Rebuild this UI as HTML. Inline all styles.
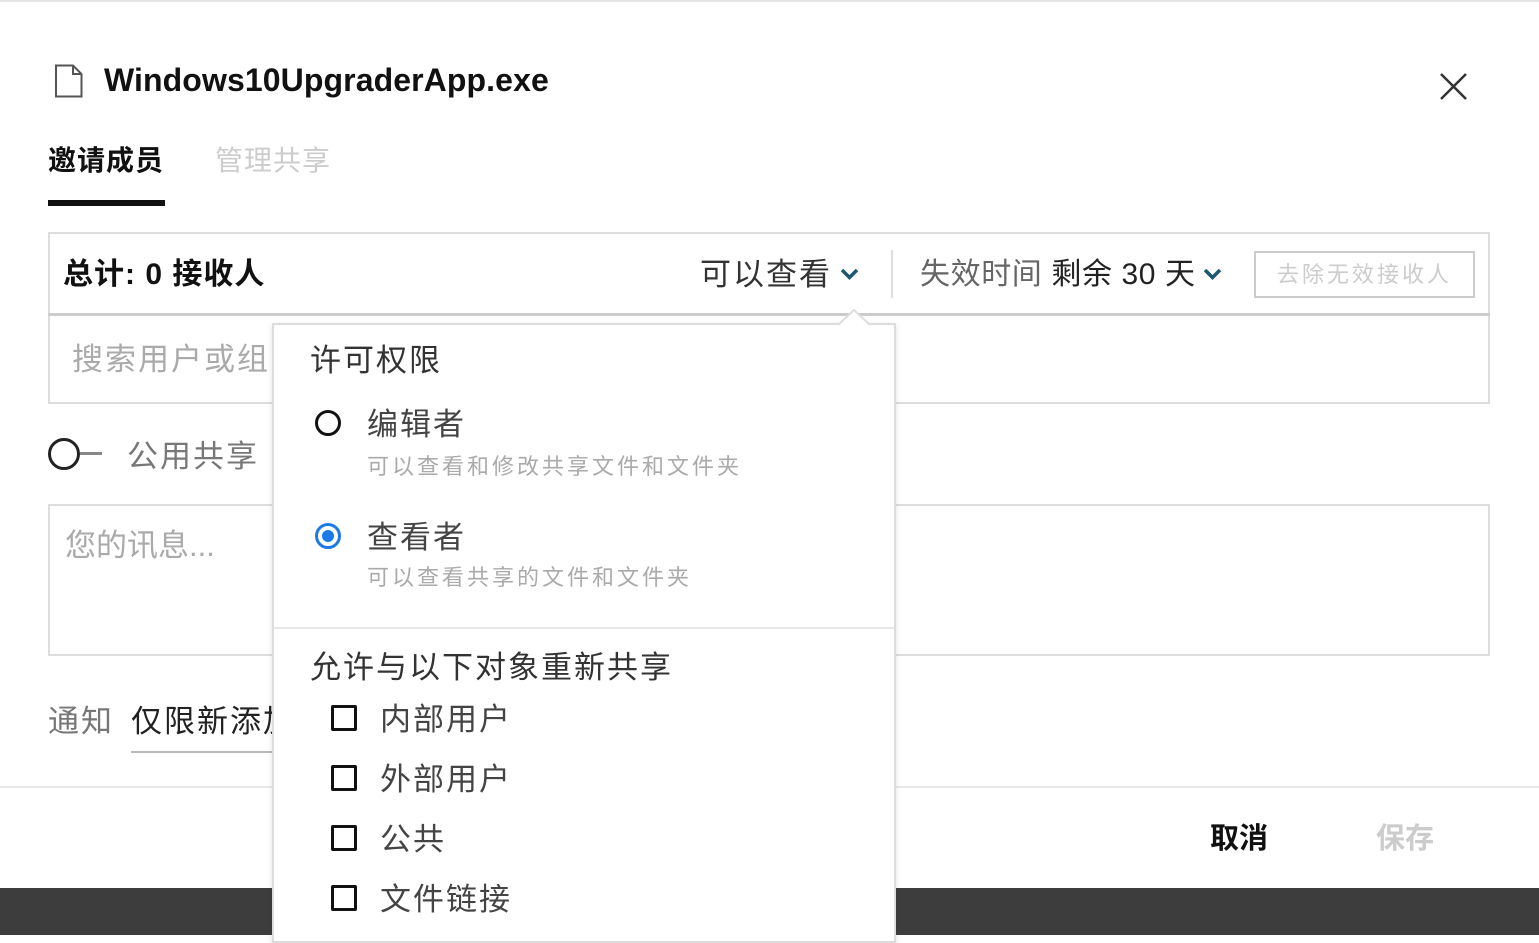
<!DOCTYPE html>
<html><head><meta charset="utf-8"><style>
*{margin:0;padding:0;box-sizing:border-box}
body{width:1539px;height:935px;overflow:hidden;background:#fff;position:relative;font-family:"Liberation Sans","Noto Sans CJK SC",sans-serif;color:#333}
.a{position:absolute;white-space:nowrap;line-height:1}
.l{letter-spacing:2px}
.cb{position:absolute;width:26px;height:26px;border:3px solid #111;border-radius:2px;left:331px}
</style></head><body>
<div class="a" style="left:0;top:0;width:1539px;height:2px;background:#e6e6e6"></div>
<svg class="a" style="left:54px;top:64px" width="30" height="34" viewBox="0 0 30 34"><path d="M2 1.5H19L27.5 10V32.5H2Z M19 1.5V10H27.5" fill="none" stroke="#555" stroke-width="2"/></svg>
<div class="a" style="left:104px;top:64px;font-size:32px;font-weight:bold;color:#111;letter-spacing:0.1px">Windows10UpgraderApp.exe</div>
<svg class="a" style="left:1440px;top:73px" width="27" height="27" viewBox="0 0 27 27"><path d="M1 1L26 26M26 1L1 26" stroke="#333" stroke-width="2.5"/></svg>
<div class="a" style="left:48px;top:147px;font-size:28px;font-weight:bold;color:#111;letter-spacing:1px">邀请成员</div>
<div class="a" style="left:215px;top:147px;font-size:28px;color:#ccc;letter-spacing:1px">管理共享</div>
<div class="a" style="left:48px;top:200px;width:117px;height:6px;background:#111"></div>
<div class="a" style="left:48px;top:232px;width:1442px;height:172px;border:2px solid #ddd"></div>
<div class="a" style="left:48px;top:313px;width:1442px;height:3px;background:#ccc"></div>
<div class="a" style="left:63px;top:260px;font-size:30px;font-weight:bold;color:#111;letter-spacing:1px">总计: 0 接收人</div>
<div class="a l" style="left:700px;top:259px;font-size:31px;color:#333">可以查看</div>
<svg class="a" style="left:840px;top:267px" width="19" height="14" viewBox="0 0 19 14"><path d="M2 3L9.5 10.5L17 3" fill="none" stroke="#1d5870" stroke-width="3.5"/></svg>
<div class="a" style="left:891px;top:250px;width:2px;height:48px;background:#ddd"></div>
<div class="a" style="left:920px;top:260px;font-size:30px;color:#666;letter-spacing:0.6px">失效时间 <span style="color:#222">剩余 30 天</span></div>
<svg class="a" style="left:1203px;top:267px" width="19" height="14" viewBox="0 0 19 14"><path d="M2 3L9.5 10.5L17 3" fill="none" stroke="#1d5870" stroke-width="3.5"/></svg>
<div class="a" style="left:1254px;top:251px;width:221px;height:47px;border:2px solid #ccc;font-size:22px;color:#ccc;text-align:center;line-height:43px;letter-spacing:3px">去除无效接收人</div>
<div class="a l" style="left:72px;top:344px;font-size:31px;color:#aaa">搜索用户或组</div>
<div class="a" style="left:48px;top:438px;width:32px;height:32px;border:3px solid #222;border-radius:50%"></div>
<div class="a" style="left:80px;top:452px;width:22px;height:3px;background:#888"></div>
<div class="a l" style="left:127px;top:441px;font-size:31px;color:#777">公用共享</div>
<div class="a" style="left:48px;top:504px;width:1442px;height:152px;border:2px solid #ddd"></div>
<div class="a" style="left:65px;top:530px;font-size:31px;color:#aaa">您的讯息...</div>
<div class="a l" style="left:48px;top:706px;font-size:31px;color:#777">通知</div>
<div class="a l" style="left:131px;top:706px;font-size:31px;color:#222">仅限新添加</div>
<div class="a" style="left:131px;top:751px;width:150px;height:2px;background:#bbb"></div>
<div class="a" style="left:0;top:786px;width:1539px;height:2px;background:#e8e8e8"></div>
<div class="a" style="left:1210px;top:825px;font-size:29px;font-weight:bold;color:#111">取消</div>
<div class="a" style="left:1376px;top:825px;font-size:29px;font-weight:bold;color:#ccc">保存</div>
<div class="a" style="left:0;top:888px;width:1539px;height:47px;background:#3d3d3d"></div>
<div class="a" style="left:272px;top:323px;width:624px;height:620px;background:#fff;border:2px solid #ddd;box-shadow:0 2px 6px rgba(0,0,0,.12)"></div>
<svg class="a" style="left:838px;top:309px" width="32" height="17" viewBox="0 0 32 17"><path d="M0 16L16 1L32 16" fill="#fff" stroke="#ddd" stroke-width="2"/></svg>
<div class="a l" style="left:310px;top:345px;font-size:31px;color:#333">许可权限</div>
<div class="a" style="left:315px;top:410px;width:26px;height:26px;border:3px solid #111;border-radius:50%"></div>
<div class="a l" style="left:367px;top:409px;font-size:31px;color:#444">编辑者</div>
<div class="a" style="left:367px;top:456px;font-size:22px;color:#aaa;letter-spacing:3px">可以查看和修改共享文件和文件夹</div>
<div class="a" style="left:315px;top:523px;width:26px;height:26px;border:3px solid #1a7ae8;border-radius:50%"><div style="position:absolute;left:4px;top:4px;width:12px;height:12px;border-radius:50%;background:#1a7ae8"></div></div>
<div class="a l" style="left:367px;top:522px;font-size:31px;color:#444">查看者</div>
<div class="a" style="left:367px;top:567px;font-size:22px;color:#aaa;letter-spacing:3px">可以查看共享的文件和文件夹</div>
<div class="a" style="left:274px;top:627px;width:620px;height:2px;background:#e8e8e8"></div>
<div class="a l" style="left:310px;top:652px;font-size:31px;color:#333">允许与以下对象重新共享</div>
<div class="cb" style="top:705px"></div><div class="a l" style="left:380px;top:704px;font-size:31px;color:#444">内部用户</div>
<div class="cb" style="top:765px"></div><div class="a l" style="left:380px;top:764px;font-size:31px;color:#444">外部用户</div>
<div class="cb" style="top:825px"></div><div class="a l" style="left:380px;top:824px;font-size:31px;color:#444">公共</div>
<div class="cb" style="top:885px"></div><div class="a l" style="left:380px;top:884px;font-size:31px;color:#444">文件链接</div>
</body></html>
